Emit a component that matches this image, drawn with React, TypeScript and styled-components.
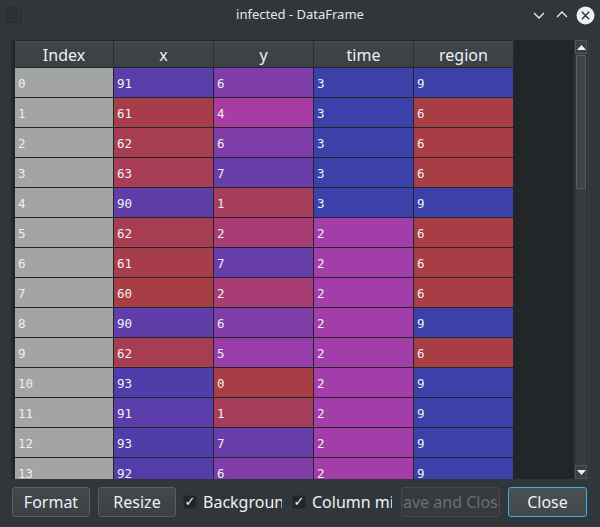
import React from "react";
import styled, { createGlobalStyle } from "styled-components";

const Global = createGlobalStyle`
  html, body { margin: 0; padding: 0; background: #31363b; }
  body { font-family: "Noto Sans", "DejaVu Sans", sans-serif; }
  * { box-sizing: border-box; }
`;

const Window = styled.div`
  width: 600px;
  height: 527px;
  background: #31363b;
  display: flex;
  flex-direction: column;
  overflow: hidden;
`;

const TitleBar = styled.div`
  height: 30px;
  display: flex;
  align-items: center;
  padding: 0 5px 0 6px;
  position: relative;
`;

const Title = styled.div`
  position: absolute;
  left: 0;
  right: 0;
  top: 0;
  height: 28px;
  display: flex;
  align-items: center;
  justify-content: center;
  color: #e6e7e9;
  font-size: 13px;
  pointer-events: none;
`;

const TitleControls = styled.div`
  margin-left: auto;
  display: flex;
  align-items: center;
  gap: 5px;
`;

const CtrlIcon = styled.svg`
  display: block;
`;

const Body = styled.div`
  flex: 1;
  display: flex;
  flex-direction: column;
  padding: 10px 11px 0 11px;
`;

const TableFrame = styled.div`
  height: 439px;
  display: flex;
  border-left: 1px solid #25282c;
`;

const GridArea = styled.div`
  flex: 1;
  background: #232629;
  overflow: hidden;
  padding-left: 2px;
  padding-top: 1px;
  border-left: 1px solid #2a2e32;
`;

const HeaderRow = styled.div`
  display: flex;
  height: 27px;
`;

const HeaderCell = styled.div<{ $w: number }>`
  width: ${(p) => p.$w}px;
  height: 27px;
  flex: none;
  background: linear-gradient(#40454a, #3b4045);
  border-right: 1px solid #2b2f33;
  border-bottom: 1px solid #232629;
  border-top: 1px solid #474c51;
  color: #eff0f1;
  font-size: 16px;
  display: flex;
  align-items: center;
  justify-content: center;
`;

const DataRow = styled.div`
  display: flex;
  height: 30px;
`;

const Cell = styled.div<{ $w: number; $bg: string }>`
  width: ${(p) => p.$w}px;
  height: 30px;
  flex: none;
  background: ${(p) => p.$bg};
  border-right: 1px solid #232629;
  border-bottom: 1px solid #232629;
  color: #eff0f1;
  font-family: "DejaVu Sans Mono", "Liberation Mono", monospace;
  font-size: 12.5px;
  display: flex;
  align-items: center;
  padding-left: 3px;
  padding-top: 1px;
`;

const ScrollBar = styled.div`
  width: 15px;
  display: flex;
  flex-direction: column;
  background: #31363b;
  padding: 0 1px 0 1px;
  border-right: 1px solid #3a3f44;
`;

const ArrowBtn = styled.div`
  height: 14px;
  background: #3b4045;
  border: 1px solid #50555a;
  display: flex;
  align-items: center;
  justify-content: center;
`;

const Track = styled.div`
  flex: 1;
  background: #383c41;
  border-left: 1px solid #2e3236;
  border-right: 1px solid #2e3236;
  display: flex;
  flex-direction: column;
`;

const Thumb = styled.div`
  height: 134px;
  margin-top: 1px;
  background: #3e4348;
  border: 1px solid #5a5e63;
  border-radius: 1px;
`;

const ButtonRow = styled.div`
  display: flex;
  align-items: center;
  height: 30px;
  margin-top: 8px;
  padding-left: 1px;
`;

const Button = styled.div<{ $w: number; $ml: number; $focus?: boolean; $disabled?: boolean }>`
  width: ${(p) => p.$w}px;
  margin-left: ${(p) => p.$ml}px;
  height: 30px;
  flex: none;
  border-radius: 3px;
  border: 1px solid ${(p) => (p.$focus ? "#3daee9" : p.$disabled ? "#45494e" : "#5a5e63")};
  background: ${(p) =>
    p.$disabled
      ? "#363a3f"
      : p.$focus
      ? "linear-gradient(#4a4f54, #43484d)"
      : "linear-gradient(#43484d, #3b4045)"};
  color: ${(p) => (p.$disabled ? "#6b6f73" : "#eff0f1")};
  font-size: 16px;
  display: flex;
  align-items: center;
  justify-content: center;
  white-space: nowrap;
  overflow: hidden;
  padding-bottom: 1px;
`;

const Check = styled.div<{ $ml: number; $lw: number }>`
  margin-left: ${(p) => p.$ml}px;
  width: ${(p) => 20 + p.$lw}px;
  flex: none;
  display: flex;
  align-items: center;
  gap: 6px;
  overflow: hidden;
`;

const CheckBox = styled.div`
  width: 14px;
  height: 14px;
  flex: none;
  background: #232629;
  border: 1px solid #2c3034;
  color: #eff0f1;
  font-size: 13px;
  line-height: 12px;
  display: flex;
  align-items: center;
  justify-content: center;
  font-family: "DejaVu Sans", sans-serif;
`;

const CheckLabel = styled.div<{ $w: number }>`
  width: ${(p) => p.$w}px;
  flex: none;
  overflow: hidden;
  white-space: nowrap;
  color: #eff0f1;
  font-size: 16px;
  padding-bottom: 1px;
`;

type Row = [number, number, number, number];
const data: Row[] = [
  [91, 6, 3, 9],
  [61, 4, 3, 6],
  [62, 6, 3, 6],
  [63, 7, 3, 6],
  [90, 1, 3, 9],
  [62, 2, 2, 6],
  [61, 7, 2, 6],
  [60, 2, 2, 6],
  [90, 6, 2, 9],
  [62, 5, 2, 6],
  [93, 0, 2, 9],
  [91, 1, 2, 9],
  [93, 7, 2, 9],
  [92, 6, 2, 9],
  [61, 3, 2, 6],
];

const ranges: [number, number][] = [
  [60, 97],
  [0, 9],
  [1, 3],
  [6, 9],
];

function hsvToRgb(h: number, s: number, v: number): [number, number, number] {
  const i = Math.floor(h * 6);
  const f = h * 6 - i;
  const p = v * (1 - s);
  const q = v * (1 - f * s);
  const t = v * (1 - (1 - f) * s);
  let r = 0, g = 0, b = 0;
  switch (((i % 6) + 6) % 6) {
    case 0: r = v; g = t; b = p; break;
    case 1: r = q; g = v; b = p; break;
    case 2: r = p; g = v; b = t; break;
    case 3: r = p; g = q; b = v; break;
    case 4: r = t; g = p; b = v; break;
    default: r = v; g = p; b = q; break;
  }
  return [r * 255, g * 255, b * 255];
}

function bg(value: number, col: number): string {
  const [vmin, vmax] = ranges[col];
  let hue = 0.66 + 0.33 * (vmax - value) / (vmax - vmin);
  hue = Math.min(1, Math.abs(hue));
  const [r, g, b] = hsvToRgb(hue, 0.7, 1.0);
  const base = [35, 38, 41];
  const a = 0.6;
  const mix = (c: number, k: number) => Math.round(a * c + (1 - a) * base[k]);
  return `rgb(${mix(r, 0)}, ${mix(g, 1)}, ${mix(b, 2)})`;
}

const widths = [99, 100, 100, 100, 100];
const headers = ["Index", "x", "y", "time", "region"];

const WindowIcon = () => (
  <svg width="16" height="16" viewBox="0 0 16 16">
    <rect x="0" y="0" width="16" height="16" fill="#2b2f34" />
    {[0, 1, 2].map((c) =>
      [0, 1, 2].map((r) => (
        <rect key={`${c}-${r}`} x={1.5 + c * 4.7} y={1.5 + r * 4.7} width="3.7" height="3.7" fill="#2f3439" />
      ))
    )}
  </svg>
);

export default function App() {
  return (
    <>
      <Global />
      <Window>
        <TitleBar>
          <WindowIcon />
          <Title>infected - DataFrame</Title>
          <TitleControls>
            <CtrlIcon width="18" height="18" viewBox="0 0 18 18">
              <path d="M4 7 L9 12 L14 7" fill="none" stroke="#eff0f1" strokeWidth="1.3" />
            </CtrlIcon>
            <CtrlIcon width="18" height="18" viewBox="0 0 18 18">
              <path d="M4 11 L9 6 L14 11" fill="none" stroke="#eff0f1" strokeWidth="1.3" />
            </CtrlIcon>
            <CtrlIcon width="19" height="19" viewBox="0 0 19 19">
              <circle cx="9.5" cy="9.5" r="9" fill="#eff0f1" />
              <path d="M5.8 5.8 L13.2 13.2 M13.2 5.8 L5.8 13.2" stroke="#31363b" strokeWidth="1.5" />
            </CtrlIcon>
          </TitleControls>
        </TitleBar>
        <Body>
          <TableFrame>
            <GridArea>
              <HeaderRow>
                {headers.map((h, i) => (
                  <HeaderCell key={h} $w={widths[i]}>{h}</HeaderCell>
                ))}
              </HeaderRow>
              {data.map((row, ri) => (
                <DataRow key={ri}>
                  <Cell $w={widths[0]} $bg="#a3a5a2">{ri}</Cell>
                  {row.map((v, ci) => (
                    <Cell key={ci} $w={widths[ci + 1]} $bg={bg(v, ci)}>{v}</Cell>
                  ))}
                </DataRow>
              ))}
            </GridArea>
            <ScrollBar>
              <ArrowBtn>
                <svg width="9" height="5" viewBox="0 0 9 5"><path d="M0 5 L4.5 0 L9 5 Z" fill="#eff0f1" /></svg>
              </ArrowBtn>
              <Track>
                <Thumb />
              </Track>
              <ArrowBtn>
                <svg width="9" height="5" viewBox="0 0 9 5"><path d="M0 0 L4.5 5 L9 0 Z" fill="#eff0f1" /></svg>
              </ArrowBtn>
            </ScrollBar>
          </TableFrame>
          <ButtonRow>
            <Button $w={78} $ml={0}>Format</Button>
            <Button $w={78} $ml={8}>Resize</Button>
            <Check $ml={7} $lw={79}>
              <CheckBox>✓</CheckBox>
              <CheckLabel $w={79}>Background</CheckLabel>
            </Check>
            <Check $ml={10} $lw={80}>
              <CheckBox>✓</CheckBox>
              <CheckLabel $w={80}>Column min/max</CheckLabel>
            </Check>
            <Button $w={99} $ml={9} $disabled>Save and Close</Button>
            <Button $w={79} $ml={8} $focus>Close</Button>
          </ButtonRow>
        </Body>
      </Window>
    </>
  );
}
